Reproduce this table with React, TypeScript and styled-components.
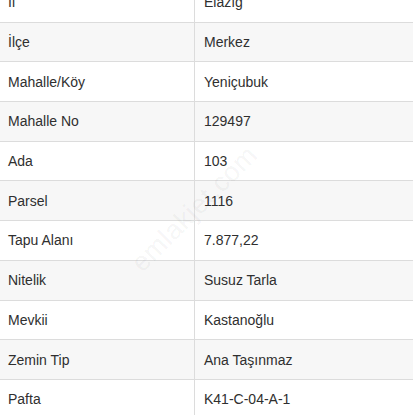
import React from "react";
import styled, { createGlobalStyle } from "styled-components";

const Global = createGlobalStyle`
  html, body { margin: 0; padding: 0; background: #ffffff; }
  body { font-family: "Liberation Sans", Arial, Helvetica, sans-serif; overflow: hidden; }
`;

const Page = styled.div`
  position: relative;
  width: 413px;
  height: 415px;
  overflow: hidden;
  background: #ffffff;
`;

const Table = styled.div`
  display: flex;
  flex-direction: column;
  margin-top: -17px;
`;

const Row = styled.div<{ $alt: boolean }>`
  display: grid;
  grid-template-columns: 194px 1fr;
  height: 39.7px;
  box-sizing: border-box;
  border-bottom: 1px solid #dcdcdc;
  background: ${(p) => (p.$alt ? "#f7f7f7" : "#ffffff")};
`;

const Cell = styled.div<{ $value?: boolean }>`
  display: flex;
  align-items: center;
  font-size: 14px;
  color: #2f2f2f;
  white-space: nowrap;
  padding-left: ${(p) => (p.$value ? "9px" : "8px")};
  border-left: ${(p) => (p.$value ? "1px solid #dcdcdc" : "none")};
`;

const Watermark = styled.div`
  position: absolute;
  left: 136px;
  top: 252px;
  font-size: 27px;
  line-height: 30px;
  color: rgba(0, 0, 0, 0.055);
  transform: rotate(-45deg);
  transform-origin: left center;
  pointer-events: none;
  letter-spacing: 0.5px;
`;

const rows: [string, string][] = [
  ["İl", "Elazığ"],
  ["İlçe", "Merkez"],
  ["Mahalle/Köy", "Yeniçubuk"],
  ["Mahalle No", "129497"],
  ["Ada", "103"],
  ["Parsel", "1116"],
  ["Tapu Alanı", "7.877,22"],
  ["Nitelik", "Susuz Tarla"],
  ["Mevkii", "Kastanoğlu"],
  ["Zemin Tip", "Ana Taşınmaz"],
  ["Pafta", "K41-C-04-A-1"],
];

export default function App() {
  return (
    <Page>
      <Global />
      <Table>
        {rows.map(([k, v], i) => (
          <Row key={k} $alt={i % 2 === 1}>
            <Cell>{k}</Cell>
            <Cell $value>{v}</Cell>
          </Row>
        ))}
      </Table>
      <Watermark>emlakjet.com</Watermark>
    </Page>
  );
}
